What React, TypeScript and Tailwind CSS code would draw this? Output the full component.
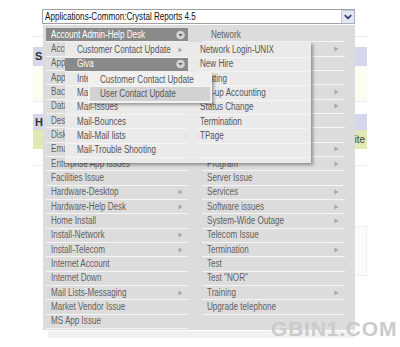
import React from 'react';

type Item = { t: string; a?: boolean; hl?: boolean; drop?: boolean; sel?: boolean; ind?: boolean };

const Arrow = ({ right }: { right: string }) => (
  <svg width="5" height="6" viewBox="0 0 5 6" className={`absolute top-1/2 -translate-y-1/2 ${right}`}>
    <path d="M0.5 0.5 L4.5 3 L0.5 5.5Z" fill="#a6a6a6" />
  </svg>
);

const Drop = () => (
  <svg width="9" height="9" viewBox="0 0 9 9" className="absolute right-[3px] top-1/2 -translate-y-1/2">
    <circle cx="4.5" cy="4.5" r="4.3" fill="#d4d4d4" />
    <path d="M2.4 3.4 L6.6 3.4 L4.5 6.1Z" fill="#5a5a5a" />
  </svg>
);

const Txt = ({ children }: { children: React.ReactNode }) => (
  <span className="inline-block origin-left scale-x-[0.81] whitespace-nowrap">{children}</span>
);

function Row({ it, pl, arrowRight, base }: { it: Item; pl: string; arrowRight: string; base: string }) {
  const cls = it.hl
    ? 'bg-[#8a8a8a] text-white'
    : it.sel
    ? 'bg-[#d2d2d2] ' + base
    : base;
  return (
    <div className={`relative flex h-[14.33px] items-center overflow-visible whitespace-nowrap border-b border-[#f5f5f5] ${it.ind ? 'pl-[9px]' : pl} ${cls}`}>
      <Txt>{it.t}</Txt>
      {it.a && <Arrow right={arrowRight} />}
      {it.drop && <Drop />}
    </div>
  );
}

const leftMain: Item[] = [
  { t: 'Account Admin-Help Desk', hl: true, drop: true },
  { t: 'Account Request' },
  { t: 'Application Access' },
  { t: 'Application Issue' },
  { t: 'Backup/Restore' },
  { t: 'Database Issue' },
  { t: 'Desktop Support' },
  { t: 'Disk Space' },
  { t: 'Email Issue' },
  { t: 'Enterprise App Issues' },
  { t: 'Facilities Issue' },
  { t: 'Hardware-Desktop', a: true },
  { t: 'Hardware-Help Desk', a: true },
  { t: 'Home Install' },
  { t: 'Install-Network', a: true },
  { t: 'Install-Telecom', a: true },
  { t: 'Internet Account' },
  { t: 'Internet Down' },
  { t: 'Mail Lists-Messaging', a: true },
  { t: 'Market Vendor Issue' },
  { t: 'MS App Issue' },
];

const rightMain: Item[] = [
  { t: 'Network', ind: true },
  { t: 'Network Access', a: true },
  { t: 'New User' },
  { t: 'Password Reset' },
  { t: 'Phone', a: true },
  { t: 'Phone Setup', a: true },
  { t: 'Printer' },
  { t: 'Printing' },
  { t: 'Program Access', a: true },
  { t: 'Program', a: true },
  { t: 'Server Issue' },
  { t: 'Services', a: true },
  { t: 'Software issues', a: true },
  { t: 'System-Wide Outage', a: true },
  { t: 'Telecom Issue' },
  { t: 'Termination', a: true },
  { t: 'Test' },
  { t: 'Test "NOR"' },
  { t: 'Training', a: true },
  { t: 'Upgrade telephone' },
];

const leftPop: Item[] = [
  { t: 'Customer Contact Update', a: true },
  { t: 'Giva', hl: true, drop: true },
  { t: 'Integration' },
  { t: 'Mail-Access' },
  { t: 'Mail-Issues' },
  { t: 'Mail-Bounces' },
  { t: 'Mail-Mail lists' },
  { t: 'Mail-Trouble Shooting' },
];

const rightPop: Item[] = [
  { t: 'Network Login-UNIX' },
  { t: 'New Hire' },
  { t: 'Posting' },
  { t: 'Set-up Accounting' },
  { t: 'Status Change' },
  { t: 'Termination' },
  { t: 'TPage' },
  { t: '' },
];

const pop2: Item[] = [{ t: 'Customer Contact Update' }, { t: 'User Contact Update', sel: true }];

export default function App() {
  return (
    <div className="relative h-[347px] w-[400px] overflow-hidden bg-white font-[family-name:'Liberation_Sans',Arial,sans-serif] text-[10px] leading-none">
      {/* underlying page */}
      <div className="pt-[9px]">
        <div className="ml-[42px] flex h-[15px] w-[313px] items-center border border-[#a0a0a0] bg-white">
          <span className="flex-1 pl-[2px] text-[#111]">
            <Txt>Applications-Common:Crystal Reports 4.5</Txt>
          </span>
          <svg width="14" height="14" viewBox="0 0 14 14" className="mr-[-1px]">
            <rect x="0.5" y="0.5" width="13" height="13" fill="#e2e7f2" stroke="#8c9dc2" strokeDasharray="1 1" />
            <path d="M3.8 5.2 L7 8.4 L10.2 5.2" fill="none" stroke="#2d3c69" strokeWidth="1.7" />
          </svg>
        </div>
        <div className="ml-[33px] mt-[12px] w-[334px]">
          <div className="h-px bg-[#ececec]" />
          <div className="mt-[10px] flex h-[19px] items-center bg-[#d6d6ea] pl-[2px] text-[11px] font-bold text-[#333]">S</div>
          <div className="h-[35px] bg-[#fcfcf2]" />
          <div className="h-px bg-[#ececec]" />
          <div className="mt-[12px] flex h-[16px] items-center bg-[#d6d6ea] pl-[2px] text-[11px] font-bold text-[#333]">H</div>
          <div className="flex h-[19px] items-center justify-end bg-[#e0e9b6] pr-[2px] text-[#444]">Composite</div>
          <div className="mt-[16px] h-px bg-[#eeeeee]" />
          <div className="ml-[150px] mt-[60px] h-[50px] border border-[#efefef] bg-[#fbfbfb]" />
        </div>
      </div>

      {/* main dropdown */}
      <div className="absolute left-[43px] top-[25px] h-[305px] w-[312px] bg-[#dcdcdc] pl-[3px] pt-[3px]">
        <div className="absolute -bottom-[8px] left-[5px] right-0 h-[7px] bg-[#f1f1f1]" />
        <div className="relative flex gap-[14px]">
          <div className="w-[142px]">
            {leftMain.map((it, i) => (
              <Row key={i} it={it} pl="pl-[5px]" arrowRight="right-[5px]" base="text-[#626262]" />
            ))}
          </div>
          <div className="w-[143px]">
            {rightMain.map((it, i) => (
              <Row key={i} it={it} pl="pl-[5px]" arrowRight="right-[6px]" base="text-[#626262]" />
            ))}
          </div>
        </div>
      </div>

      {/* sub menu 1 */}
      <div className="absolute left-[65px] top-[42px] flex h-[121px] w-[246px] gap-[8px] bg-[#eaeaea] pt-[1.5px] shadow-[2px_2px_3px_rgba(0,0,0,0.35)]">
        <div className="w-[123px]">
          {leftPop.map((it, i) => (
            <Row key={i} it={it} pl="pl-[12px]" arrowRight="right-[5px]" base="text-[#555]" />
          ))}
        </div>
        <div className="w-[112px]">
          {rightPop.map((it, i) => (
            <Row key={i} it={it} pl="pl-[4px]" arrowRight="right-[5px]" base="text-[#555]" />
          ))}
        </div>
      </div>

      {/* sub menu 2 */}
      <div className="absolute left-[88px] top-[72px] h-[31px] w-[124px] bg-[#f0f0f0] px-[2px] pt-[1px] shadow-[2px_2px_3px_rgba(0,0,0,0.35)]">
        {pop2.map((it, i) => (
          <Row key={i} it={it} pl="pl-[10px]" arrowRight="right-[5px]" base="text-[#555]" />
        ))}
      </div>

      {/* watermark */}
      <div className="absolute left-[271px] top-[318px] text-[21px] font-bold tracking-[0.8px] text-[#cbcbcb]">
        GBIN1.COM
      </div>
    </div>
  );
}
